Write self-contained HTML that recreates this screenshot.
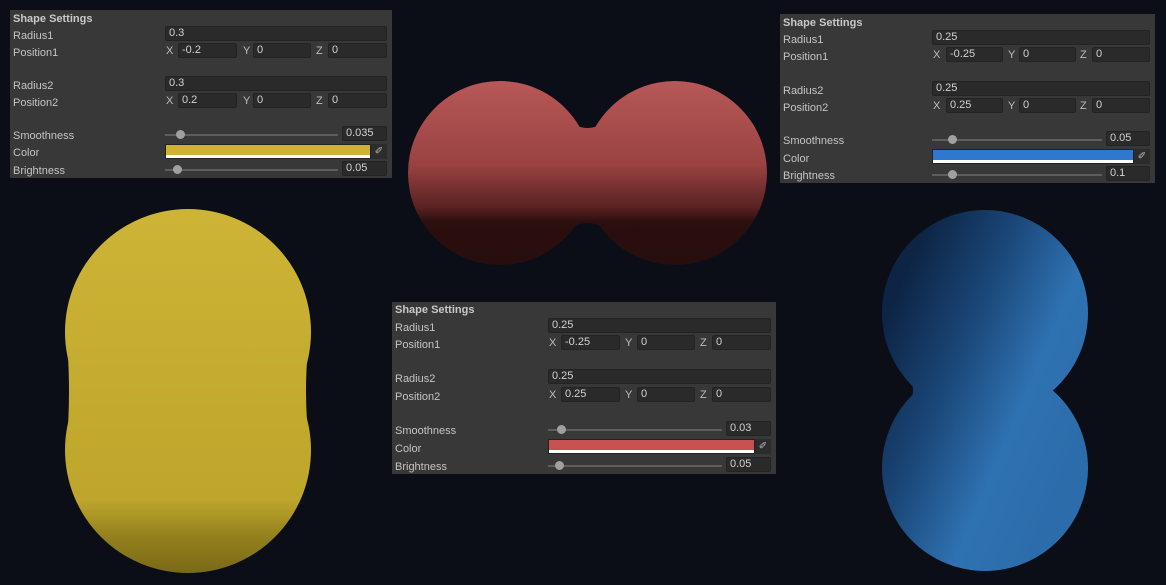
<!DOCTYPE html>
<html><head><meta charset="utf-8"><style>
*{margin:0;padding:0;box-sizing:border-box}
body{width:1166px;height:585px;background:#0b0e17;position:relative;overflow:hidden;font-family:"Liberation Sans",sans-serif;font-size:11px;color:#c4c4c4}
.p{position:absolute;background:#383838}
.r{position:absolute;left:3px;height:16px;line-height:16px;margin-top:2px}
.t{font-weight:bold;color:#c8c8c8}
.f{position:absolute;height:15px;background:#2a2a2a;border:1px solid #232323;border-radius:2px;line-height:13px;padding-left:3px;color:#d2d2d2}
.l{position:absolute;height:15px;line-height:15px;color:#bdbdbd;margin-top:1px}
.tr{position:absolute;height:2px;background:#5e5e5e}
.th{position:absolute;width:9px;height:9px;border-radius:50%;background:#a0a0a0}
.cb{position:absolute;height:15px;border:1px solid #232323;background:#fff}
.pk{position:absolute;height:15px;width:16px;background:#2c2c2c;color:#bbb;font-size:10px;text-align:center;line-height:15px}
</style></head><body>

<svg width="1166" height="585" style="position:absolute;left:0;top:0">
<defs>
<linearGradient id="ry" gradientUnits="userSpaceOnUse" x1="0" y1="210" x2="0" y2="572"><stop offset="0" stop-color="#cdb436"/><stop offset=".8" stop-color="#bea62c"/><stop offset=".9" stop-color="#94811e"/><stop offset="1" stop-color="#7a6a17"/></linearGradient>
<linearGradient id="rr" gradientUnits="userSpaceOnUse" x1="0" y1="81" x2="0" y2="266"><stop offset="0" stop-color="#b85858"/><stop offset=".45" stop-color="#9a4242"/><stop offset=".68" stop-color="#5a2222"/><stop offset=".76" stop-color="#2b0f0f"/><stop offset="1" stop-color="#280d0d"/></linearGradient>
<linearGradient id="rb" gradientUnits="userSpaceOnUse" x1="880" y1="330" x2="1090" y2="420"><stop offset="0" stop-color="#0d2444"/><stop offset=".35" stop-color="#1a4677"/><stop offset=".7" stop-color="#2f72b2"/><stop offset="1" stop-color="#2c6cab"/></linearGradient>
</defs>
<g fill="url(#ry)">
<circle cx="188" cy="332" r="123"/><circle cx="188" cy="450" r="123"/>
<path d="M66,330 Q72,391 66,452 L310,452 Q302,391 310,330 Z"/>
</g>
<g fill="url(#rr)">
<circle cx="500" cy="173" r="92"/><circle cx="675" cy="173" r="92"/>
<path d="M546,93 Q587.5,163 629,93 L629,253 Q587.5,193 546,253 Z"/>
</g>
<g fill="url(#rb)">
<circle cx="985" cy="313" r="103"/><circle cx="985" cy="468" r="103"/>
<path d="M889,350 Q937,390 889,430 L1081,430 Q1019,390 1081,350 Z"/>
</g>
</svg>

<!-- Panel 1 -->
<div class="p" style="left:10px;top:10px;width:382px;height:168px">
<div class="r t" style="top:-1px">Shape Settings</div>
<div class="r" style="top:16px">Radius1</div><div class="f" style="left:155px;top:16px;width:222px">0.3</div>
<div class="r" style="top:33px">Position1</div>
<div class="l" style="left:156px;top:33px">X</div><div class="f" style="left:168px;top:33px;width:59px">-0.2</div>
<div class="l" style="left:233px;top:33px">Y</div><div class="f" style="left:243px;top:33px;width:58px">0</div>
<div class="l" style="left:306px;top:33px">Z</div><div class="f" style="left:318px;top:33px;width:59px">0</div>
<div class="r" style="top:66px">Radius2</div><div class="f" style="left:155px;top:66px;width:222px">0.3</div>
<div class="r" style="top:83px">Position2</div>
<div class="l" style="left:156px;top:83px">X</div><div class="f" style="left:168px;top:83px;width:59px">0.2</div>
<div class="l" style="left:233px;top:83px">Y</div><div class="f" style="left:243px;top:83px;width:58px">0</div>
<div class="l" style="left:306px;top:83px">Z</div><div class="f" style="left:318px;top:83px;width:59px">0</div>
<div class="r" style="top:116px">Smoothness</div><div class="tr" style="left:155px;top:124px;width:173px"></div><div class="th" style="left:166px;top:120px"></div><div class="f" style="left:332px;top:116px;width:45px">0.035</div>
<div class="r" style="top:133px">Color</div><div class="cb" style="left:155px;top:134px;width:206px"><div style="height:10px;background:#d0b233"></div></div><div class="pk" style="left:361px;top:134px">&#x2710;</div>
<div class="r" style="top:151px">Brightness</div><div class="tr" style="left:155px;top:159px;width:173px"></div><div class="th" style="left:163px;top:155px"></div><div class="f" style="left:332px;top:151px;width:45px">0.05</div>
</div>

<!-- Panel 2 -->
<div class="p" style="left:392px;top:302px;width:384px;height:172px">
<div class="r t" style="top:-2px">Shape Settings</div>
<div class="r" style="top:16px">Radius1</div><div class="f" style="left:156px;top:16px;width:223px">0.25</div>
<div class="r" style="top:33px">Position1</div>
<div class="l" style="left:157px;top:33px">X</div><div class="f" style="left:169px;top:33px;width:59px">-0.25</div>
<div class="l" style="left:233px;top:33px">Y</div><div class="f" style="left:245px;top:33px;width:58px">0</div>
<div class="l" style="left:308px;top:33px">Z</div><div class="f" style="left:320px;top:33px;width:59px">0</div>
<div class="r" style="top:67px">Radius2</div><div class="f" style="left:156px;top:67px;width:223px">0.25</div>
<div class="r" style="top:85px">Position2</div>
<div class="l" style="left:157px;top:85px">X</div><div class="f" style="left:169px;top:85px;width:59px">0.25</div>
<div class="l" style="left:233px;top:85px">Y</div><div class="f" style="left:245px;top:85px;width:58px">0</div>
<div class="l" style="left:308px;top:85px">Z</div><div class="f" style="left:320px;top:85px;width:59px">0</div>
<div class="r" style="top:119px">Smoothness</div><div class="tr" style="left:156px;top:127px;width:174px"></div><div class="th" style="left:165px;top:123px"></div><div class="f" style="left:334px;top:119px;width:45px">0.03</div>
<div class="r" style="top:137px">Color</div><div class="cb" style="left:156px;top:137px;width:207px"><div style="height:10px;background:#c85252"></div></div><div class="pk" style="left:363px;top:137px">&#x2710;</div>
<div class="r" style="top:155px">Brightness</div><div class="tr" style="left:156px;top:163px;width:174px"></div><div class="th" style="left:163px;top:159px"></div><div class="f" style="left:334px;top:155px;width:45px">0.05</div>
</div>

<!-- Panel 3 -->
<div class="p" style="left:780px;top:14px;width:375px;height:169px">
<div class="r t" style="top:-1px">Shape Settings</div>
<div class="r" style="top:16px">Radius1</div><div class="f" style="left:152px;top:16px;width:218px">0.25</div>
<div class="r" style="top:33px">Position1</div>
<div class="l" style="left:153px;top:33px">X</div><div class="f" style="left:166px;top:33px;width:57px">-0.25</div>
<div class="l" style="left:228px;top:33px">Y</div><div class="f" style="left:239px;top:33px;width:57px">0</div>
<div class="l" style="left:300px;top:33px">Z</div><div class="f" style="left:312px;top:33px;width:58px">0</div>
<div class="r" style="top:67px">Radius2</div><div class="f" style="left:152px;top:67px;width:218px">0.25</div>
<div class="r" style="top:84px">Position2</div>
<div class="l" style="left:153px;top:84px">X</div><div class="f" style="left:166px;top:84px;width:57px">0.25</div>
<div class="l" style="left:228px;top:84px">Y</div><div class="f" style="left:239px;top:84px;width:57px">0</div>
<div class="l" style="left:300px;top:84px">Z</div><div class="f" style="left:312px;top:84px;width:58px">0</div>
<div class="r" style="top:117px">Smoothness</div><div class="tr" style="left:152px;top:125px;width:170px"></div><div class="th" style="left:168px;top:121px"></div><div class="f" style="left:326px;top:117px;width:44px">0.05</div>
<div class="r" style="top:135px">Color</div><div class="cb" style="left:152px;top:135px;width:202px"><div style="height:10px;background:#2f78d0"></div></div><div class="pk" style="left:354px;top:135px">&#x2710;</div>
<div class="r" style="top:152px">Brightness</div><div class="tr" style="left:152px;top:160px;width:170px"></div><div class="th" style="left:168px;top:156px"></div><div class="f" style="left:326px;top:152px;width:44px">0.1</div>
</div>
</body></html>
